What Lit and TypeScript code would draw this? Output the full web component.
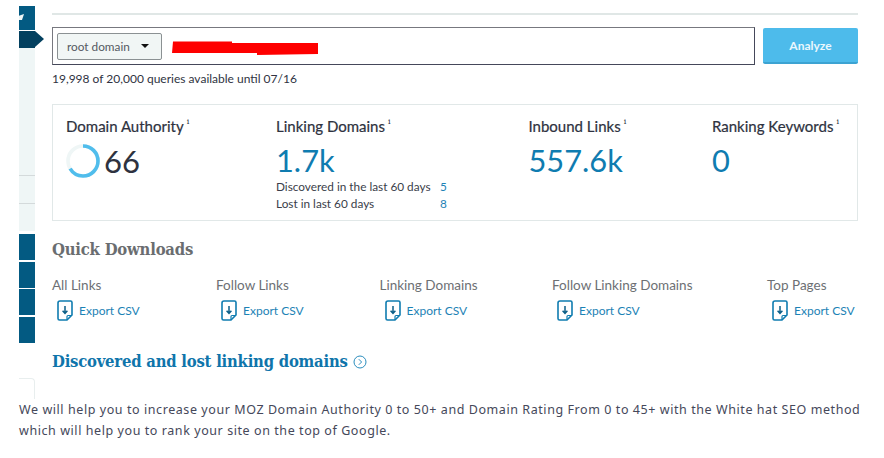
import { LitElement, html, css, svg } from "lit";
import { customElement } from "lit/decorators.js";

const fileIcon = svg`<svg class="ficon" width="16" height="21" viewBox="0 0 16 21" fill="none" stroke="#0f7cb0" stroke-width="1.6">
<path d="M3 1H13.5a1.5 1.5 0 0 1 1.5 1.5V15L10 20H2.5A1.5 1.5 0 0 1 1 18.500V3A2 2 0 0 1 3 1Z"/>
<path d="M15 15.500H11a1 1 0 0 0-1 1V20" stroke-width="1.200"/>
<path d="M8 6v7M5.600 10.800 8 13.400l2.400-2.600" stroke="#0b5f88" stroke-width="1.500"/></svg>`;

const downloads = [
  { t: "All Links", w: 164 },
  { t: "Follow Links", w: 163.5 },
  { t: "Linking Domains", w: 172.5 },
  { t: "Follow Linking Domains", w: 215 },
  { t: "Top Pages", w: 91 },
];

@customElement("app-root")
export class AppRoot extends LitElement {
  static styles = css`
    :host { display: block; width: 884px; height: 458px; background: #fff; overflow: hidden; font-family: Lato, sans-serif; color: #2f3342; }
    .top { display: flex; height: 399px; padding-left: 19px; }
    .side { width: 16px; flex: none; display: flex; flex-direction: column; }
    .blank { height: 6px; }
    .b1 { height: 24px; background: #035a82; position: relative; }
    .b1::after { content: ""; position: absolute; left: 0; top: 8px; width: 5px; height: 6px; background: #eff6f6; clip-path: polygon(0 30%, 100% 0, 60% 100%, 0 100%); }
    .b2 { height: 17px; margin-top: 1px; background: #03405f; position: relative; }
    .b2::after { content: ""; position: absolute; left: 16px; top: 0; border-top: 8.5px solid transparent; border-bottom: 8.5px solid transparent; border-left: 9px solid #03405f; }
    .lt { background: #eff6f6; box-sizing: border-box; }
    .gap1 { height: 128px; border-bottom: 1px solid #d4dadb; }
    .gap2 { height: 28px; border-bottom: 1px solid #d4dadb; }
    .gap3 { height: 27px; margin-bottom: 3px; }
    .tab { height: 26px; background: #035a82; margin-bottom: 1.5px; }
    .tab:last-of-type { margin-bottom: 0; box-shadow: 0 1px 0 #dbe6e8; }
    .foot { margin-top: 33.5px; flex: 1; background: #fff; border: 1px solid #e8eeee; border-left: 0; border-bottom: 0; border-top-right-radius: 4px; }
    .main { width: 806px; margin-left: 17px; flex: none; }
    .rule { height: 2px; margin-top: 13px; background: #e0e7e6; }
    .search { display: flex; gap: 8px; margin-top: 12px; height: 38px; }
    .field { flex: 1; border: 1px solid #45485a; border-top-color: #77787f; border-left-color: #77787f; display: flex; align-items: center; padding-left: 4px; }
    .sel { width: 105px; height: 27px; box-sizing: border-box; border: 1px solid #8b9193; border-radius: 2px; background: #f1f6f5; display: flex; align-items: center; padding-left: 9px; gap: 11px; font-size: 11.8px; color: #555a63; }
    .caret { width: 0; height: 0; border-left: 4px solid transparent; border-right: 4px solid transparent; border-top: 4px solid #111; margin-top: -1px; }
    .red { width: 146px; height: 14px; margin: 3px 0 0 10px; display: block; }
    .btn { width: 95px; height: 36px; margin-top: 1px; box-sizing: border-box; background: #4dbbeb; border-bottom: 2px solid #3ca3d2; border-radius: 2px; color: #eaf7fd; font-size: 12px; font-weight: 700; display: flex; align-items: center; justify-content: center; }
    .quota { margin-top: 7px; font-size: 12px; line-height: 14px; color: #2f3342; }
    .card { margin-top: 18px; height: 117px; box-sizing: border-box; border: 1px solid #e1e8e8; display: grid; grid-template-columns: 210px 252.5px 183.5px 1fr; padding: 12px 0 0 13px; }
    .label { font-size: 15px; line-height: 18px; color: #2e3240; -webkit-text-stroke: 0.2px #2e3240; white-space: nowrap; }
    sup { font: 8px/0 "DejaVu Serif", serif; margin-left: 3px; position: relative; top: -2px; vertical-align: super; -webkit-text-stroke: 0; }
    .val { font-size: 30.8px; line-height: 38px; color: #0f7cb0; margin-top: 7px; }
    .da { display: flex; align-items: center; gap: 4px; margin-top: 7px; color: #2e3240; font-size: 31px; line-height: 38px; }
    .sub { display: grid; grid-template-columns: 164px auto; font-size: 11.8px; line-height: 17px; margin-top: -2px; color: #3a3e4a; }
    .sub b { font-weight: 400; color: #1e82b6; }
    h2 { margin: 18px 0 0; font: 700 16.5px/22px "DejaVu Serif Condensed", "DejaVu Serif", serif; letter-spacing: -0.2px; color: #6a6d70; }
    .dl { display: flex; margin-top: 15px; }
    .dl > div { flex: none; }
    .dt { font-size: 13.5px; line-height: 18px; color: #6d7074; white-space: nowrap; }
    .ex { display: flex; align-items: center; gap: 6px; margin: 6px 0 0 5px; height: 21px; color: #1c82b5; font-size: 12px; white-space: nowrap; }
    h3 { margin: 29px 0 0; font: 700 16.5px/24px "DejaVu Serif Condensed", "DejaVu Serif", serif; letter-spacing: -0.22px; color: #0f75ab; display: flex; align-items: center; gap: 5px; }
    .body { padding-left: 19px; width: 850px; font: 12.5px/21px "Noto Sans", sans-serif; letter-spacing: 0.57px; color: #45485a; }
  `;
  render() {
    return html`
      <div class="top">
        <div class="side">
          <div class="blank"></div>
          <div class="b1"></div>
          <div class="b2"></div>
          <div class="lt gap1"></div>
          <div class="lt gap2"></div>
          <div class="lt gap3"></div>
          <div class="tab"></div><div class="tab"></div><div class="tab"></div><div class="tab"></div>
          <div class="foot"></div>
        </div>
        <div class="main">
          <div class="rule"></div>
          <div class="search">
            <div class="field">
              <div class="sel">root domain <span class="caret"></span></div>
              <svg class="red" viewBox="0 0 146 14"><path fill="#fe0000" d="M1 0.5H60V2H146V13L85 14V12H0Z"/></svg>
            </div>
            <div class="btn">Analyze</div>
          </div>
          <div class="quota">19,998 of 20,000 queries available until 07/16</div>
          <div class="card">
            <div>
              <div class="label">Domain Authority<sup>i</sup></div>
              <div class="da">
                <svg width="34" height="36" viewBox="0 0 34 36" fill="none" stroke-width="3.6">
                  <circle cx="17" cy="18" r="15" stroke="#eff6f6"/>
                  <circle cx="17" cy="18" r="15" stroke="#50bdec" stroke-dasharray="62.2 94.2" transform="rotate(-90 17 18)"/>
                </svg>
                66
              </div>
            </div>
            <div>
              <div class="label">Linking Domains<sup>i</sup></div>
              <div class="val">1.7k</div>
              <div class="sub"><span>Discovered in the last 60 days</span><b>5</b><span>Lost in last 60 days</span><b>8</b></div>
            </div>
            <div>
              <div class="label">Inbound Links<sup>i</sup></div>
              <div class="val">557.6k</div>
            </div>
            <div>
              <div class="label">Ranking Keywords<sup>i</sup></div>
              <div class="val">0</div>
            </div>
          </div>
          <h2>Quick Downloads</h2>
          <div class="dl">
            ${downloads.map((d) => html`<div style="width:${d.w}px"><div class="dt">${d.t}</div><div class="ex">${fileIcon}Export CSV</div></div>`)}
          </div>
          <h3>Discovered and lost linking domains
            <svg width="14" height="14" viewBox="0 0 14 14" fill="none" stroke="#2a8dbd"><circle cx="7" cy="7" r="6"/><path d="M5.8 4.2 8.6 7 5.8 9.8"/></svg>
          </h3>
        </div>
      </div>
      <div class="body">We will help you to increase your MOZ Domain Authority 0 to 50+ and Domain Rating From 0 to 45+ with the White hat SEO method which will help you to rank your site on the top of Google.</div>
    `;
  }
}
